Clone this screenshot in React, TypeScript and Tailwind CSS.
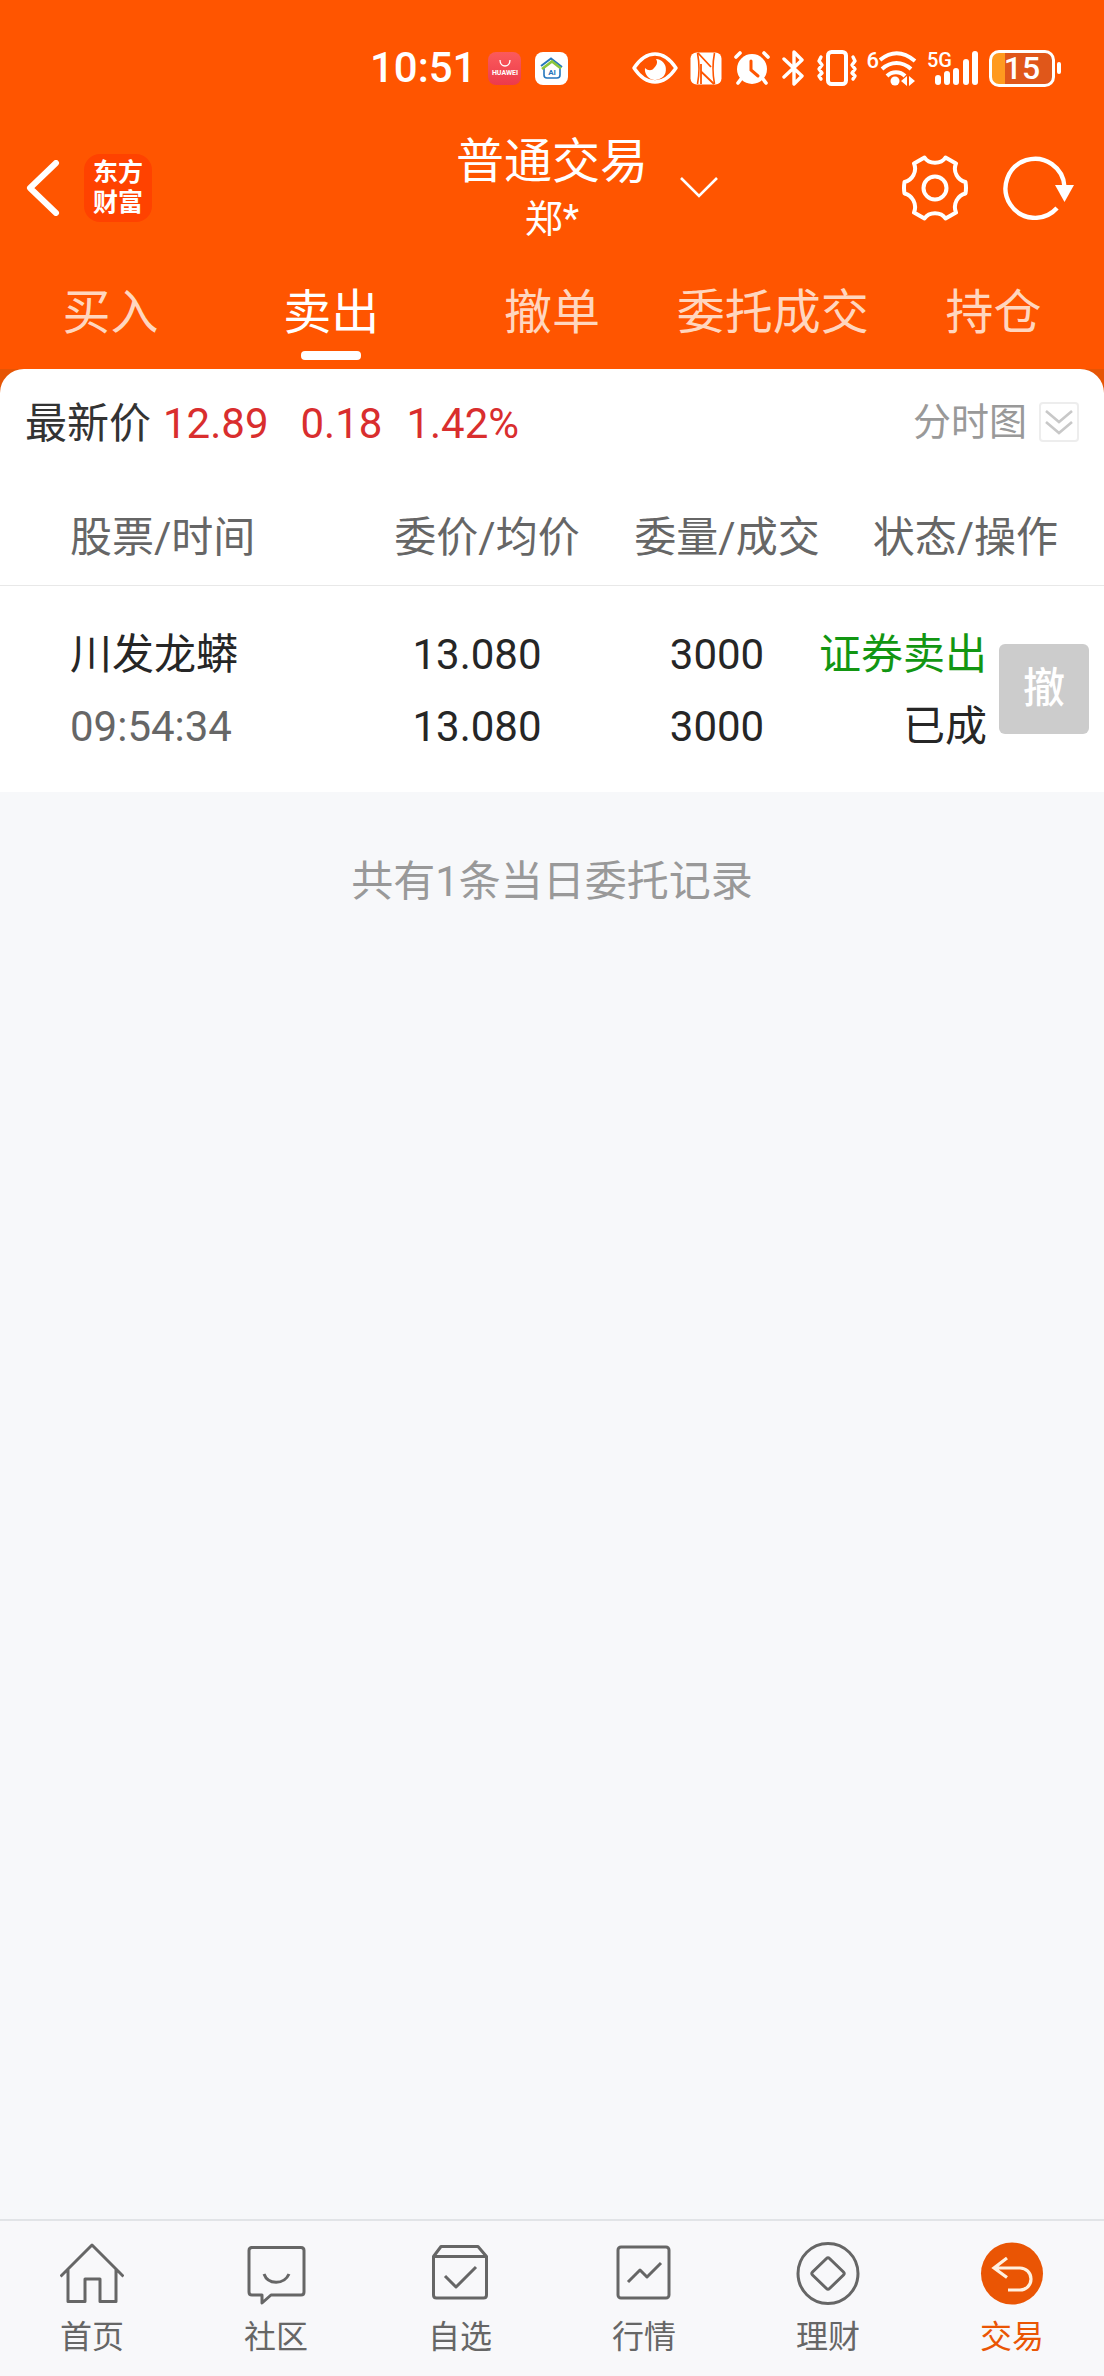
import React from "react";

type IconProps = { className?: string };

function HuaweiAppIcon() {
  return (
    <span className="flex h-[33px] w-[33px] flex-col items-center justify-center rounded-lg bg-gradient-to-b from-[#fb5a5c] to-[#ec3a4c]">
      <svg viewBox="0 0 12 7" className="h-[7px] w-3" fill="none" stroke="#fff" strokeWidth="1.300">
        <path d="M1 0c0 8 10 8 10 0" />
      </svg>
      <span className="mt-0.5 text-[7px] leading-[8px] font-bold text-white">HUAWEI</span>
    </span>
  );
}

function SmartHomeIcon() {
  return (
    <svg viewBox="0 0 33 33" className="h-[33px] w-[33px]">
      <rect width="33" height="33" rx="8" fill="#fff" />
      <path d="M9 15v8c0 2 1 3 3 3h10c2 0 3-1 3-3v-8" fill="none" stroke="#2577bd" strokeWidth="1.600" />
      <path d="M6 14 16 6.500l11 8.500" fill="none" stroke="#2577bd" strokeWidth="2" />
      <path d="M7 17 17 9.500l9 7" fill="none" stroke="#8cc63e" strokeWidth="2.600" />
      <text x="17" y="23" textAnchor="middle" fontSize="8" fontWeight="700" fill="#2577bd">
        AI
      </text>
    </svg>
  );
}

function EyeIcon() {
  return (
    <svg viewBox="0 0 46 32" className="h-8 w-[46px]" fill="none">
      <path d="M2 16C8 7 15 2 23 2s15 5 21 14c-6 9-13 14-21 14S8 25 2 16Z" stroke="#fff" strokeWidth="3.400" strokeLinejoin="round" />
      <path d="M24 7a10.500 10.500 0 1 1-11 9c3 3 7 3 9 0 3-3 4-6 2-9Z" fill="#fff" />
    </svg>
  );
}

function NfcIcon() {
  return (
    <svg viewBox="0 0 32 33" className="h-[33px] w-8">
      <rect x="0.500" y="0.500" width="31" height="32" rx="6" fill="#fff" />
      <path d="M7.500 1q3 15.500 0 31M24.500 1q-3 15.500 0 31" fill="none" stroke="#ff5500" strokeWidth="1.600" />
      <path d="M8 1 21 15M11 12V32M11 19.500 24 32" fill="none" stroke="#ff5500" strokeWidth="1.800" />
    </svg>
  );
}

function AlarmIcon() {
  return (
    <svg viewBox="0 0 36 34" className="h-[34px] w-9" fill="none" stroke="#fff" strokeLinecap="round">
      <circle cx="18" cy="18" r="15" fill="#fff" stroke="none" />
      <path d="M2 6l4-4M34 6l-4-4" strokeWidth="3.600" />
      <path d="M7 28l-3 4M29 28l3 4" strokeWidth="3.600" />
      <path d="M17 10v9l7 6" stroke="#ff5500" strokeWidth="3" />
    </svg>
  );
}

function BluetoothIcon() {
  return (
    <svg viewBox="0 0 22 36" className="h-9 w-[22px]" fill="none" stroke="#fff" strokeWidth="3.400" strokeLinecap="round" strokeLinejoin="round">
      <path d="M2 9l18 17-8 8V2l8 8L2 27" />
    </svg>
  );
}

function VibrateIcon() {
  return (
    <svg viewBox="0 0 42 36" className="h-9 w-[42px]" fill="none" stroke="#fff" strokeWidth="3.400" strokeLinecap="round" strokeLinejoin="round">
      <rect x="12" y="2" width="18" height="32" rx="3.500" strokeWidth="4" />
      <path d="M5 7l-2 4 3 4-3 4 3 4-3 3 2 3M37 7l2 4-3 4 3 4-3 4 3 3-2 3" />
    </svg>
  );
}

function WifiIcon() {
  return (
    <span className="flex h-9 items-start">
      <span className="text-[22px] leading-[22px] font-medium">6</span>
      <svg viewBox="0 0 38 36" className="h-9 w-[38px]" fill="none" stroke="#fff" strokeWidth="4">
        <path d="M1 10C12 1 24 1 36 11M3 19c9-8 20-8 29 0M8 26c5-5 13-5 18 0" />
        <circle cx="16" cy="31" r="4.500" fill="#fff" stroke="none" />
        <path d="M28 26v10l-6-5zM30 26v10l6-5z" fill="#fff" stroke="none" />
      </svg>
    </span>
  );
}

function SignalIcon() {
  return (
    <span className="relative block h-9 w-[52px]">
      <svg viewBox="0 0 52 36" className="h-9 w-[52px]" fill="#fff">
        <rect x="8" y="25" width="6" height="10" rx="3" />
        <rect x="17" y="21" width="6" height="14" rx="3" />
        <rect x="26" y="18" width="6" height="17" rx="3" />
        <rect x="36" y="9" width="6" height="26" rx="3" />
        <rect x="45" y="1" width="6" height="34" rx="3" />
      </svg>
      <span className="absolute top-0 left-0 text-[20px] leading-[20px] font-medium">5G</span>
    </span>
  );
}

function Battery() {
  return (
    <span className="flex items-center gap-[2px]">
      <span className="flex h-[37px] w-[66px] items-center justify-center rounded-[10px] border-[3px] border-white bg-[linear-gradient(to_right,#ff9a1f_13px,#e0571a_13px)] text-[32px] leading-[32px] font-medium">
        15
      </span>
      <span className="h-3 w-1 rounded-full bg-white" />
    </span>
  );
}

function BackIcon() {
  return (
    <svg viewBox="0 0 34 56" className="h-14 w-[34px]" fill="none" stroke="#fff" strokeWidth="6" strokeLinecap="round" strokeLinejoin="round">
      <path d="M30 3 4 28l26 25" />
    </svg>
  );
}

function GearIcon() {
  return (
    <svg viewBox="0 0 66 66" className="h-[66px] w-[66px]" fill="none" stroke="#fff" strokeWidth="4" strokeLinejoin="round">
      <path d="M22.500 2.500C27 9.500 39 9.500 43.500 2.500L54 8.500C50.500 16.500 56 25.500 63.500 27Q64.500 33 63.500 38.500C56 40 50.500 49 54 57.500L43.500 63.500C39 56.500 27 56.500 22.500 63.500L12 57.500C15.500 49 10 40 2.500 38.500Q1.500 33 2.500 27C10 25.500 15.500 16.500 12 8.500Z" />
      <circle cx="33" cy="33" r="11.500" />
    </svg>
  );
}

function RefreshIcon() {
  return (
    <svg viewBox="0 0 72 64" className="h-16 w-[72px]" fill="none" stroke="#fff" strokeWidth="4.400">
      <path d="M61.500 31A29.500 29.500 0 1 0 54 52" />
      <path d="M52 29h19l-9.500 17z" fill="#fff" stroke="none" />
    </svg>
  );
}

function HomeIcon({ className }: IconProps) {
  return (
    <svg viewBox="0 0 64 64" className={className} fill="none" stroke="currentColor" strokeWidth="3" strokeLinejoin="round">
      <path d="M0.500 35.500 32 4l31.500 31.500M8 28v32.500h17V38h15v22.500h16V28" />
    </svg>
  );
}

function CommunityIcon({ className }: IconProps) {
  return (
    <svg viewBox="0 0 64 64" className={className} fill="none" stroke="currentColor" strokeWidth="3" strokeLinejoin="round">
      <path d="M7 6.500h50q3 0 3 3V51q0 3-3 3H27l-9 8v-8H8q-3 0-3-3V9.500q0-3 3-3Z" />
      <path d="M20 33c4 11 20 11 25 0" />
    </svg>
  );
}

function WatchlistIcon({ className }: IconProps) {
  return (
    <svg viewBox="0 0 64 64" className={className} fill="none" stroke="currentColor" strokeWidth="3" strokeLinejoin="round">
      <path d="M5.500 15.500 13 5.500h37l8.500 10V54q0 3-3 3h-47q-3 0-3-3ZM5.500 15.500h53" />
      <path d="M17 35l11 11 20-20" />
    </svg>
  );
}

function MarketIcon({ className }: IconProps) {
  return (
    <svg viewBox="0 0 64 64" className={className} fill="none" stroke="currentColor" strokeWidth="3" strokeLinejoin="round">
      <rect x="6" y="6" width="51" height="51" rx="3" />
      <path d="M16 41l12-12 7 7 14-14" />
    </svg>
  );
}

function WealthIcon({ className }: IconProps) {
  return (
    <svg viewBox="0 0 64 64" className={className} fill="none" stroke="currentColor" strokeWidth="3" strokeLinejoin="round">
      <circle cx="32" cy="32.500" r="30" />
      <path d="M30.500 17.500q1.500-1.500 3 0l14 13.500q1.500 1.500 0 3l-14 13.500q-1.500 1.500-3 0L16.500 34q-1.500-1.500 0-3Z" />
    </svg>
  );
}

function TradeIcon({ className }: IconProps) {
  return (
    <svg viewBox="0 0 64 64" className={className} fill="none">
      <circle cx="32" cy="32.500" r="31" fill="currentColor" />
      <path d="M27 17 14 27l13 9.500M15 27h25a10.500 10.500 0 0 1 0 22H28" stroke="#fff0e0" strokeWidth="3.200" />
    </svg>
  );
}

const tabs = ["买入", "卖出", "撤单", "委托成交", "持仓"];

const navItems = [
  { label: "首页", Icon: HomeIcon },
  { label: "社区", Icon: CommunityIcon },
  { label: "自选", Icon: WatchlistIcon },
  { label: "行情", Icon: MarketIcon },
  { label: "理财", Icon: WealthIcon },
  { label: "交易", Icon: TradeIcon },
];

function StatusBar() {
  return (
    <div className="flex h-[130px] items-start justify-end pt-12 pr-[43px]">
      <div className="flex h-10 items-center">
        <span className="text-[42px] leading-10 font-medium">10:51</span>
        <span className="ml-3 flex gap-3.5">
          <HuaweiAppIcon />
          <SmartHomeIcon />
        </span>
        <span className="ml-16 flex items-center gap-3">
          <EyeIcon />
          <NfcIcon />
          <AlarmIcon />
          <BluetoothIcon />
          <VibrateIcon />
        </span>
        <span className="ml-2 flex items-center gap-2.5">
          <WifiIcon />
          <SignalIcon />
          <Battery />
        </span>
      </div>
    </div>
  );
}

function TitleBar() {
  return (
    <div className="grid h-[116px] grid-cols-[1fr_auto_1fr] items-center">
      <div className="flex items-center pl-[26px]">
        <button aria-label="返回">
          <BackIcon />
        </button>
        <span className="ml-6 flex h-[68px] w-[68px] flex-col items-center justify-center rounded-2xl bg-[#ff4200] text-[25px] leading-[30px] font-bold">
          <span>东方</span>
          <span>财富</span>
        </span>
      </div>
      <h1 className="pt-0.5 text-center">
        <span className="block text-[48px] leading-[60px]">普通交易</span>
        <span className="block text-[38px] leading-[54px]">郑*</span>
      </h1>
      <div className="flex items-center pr-[29px] pl-8">
        <button aria-label="切换账户">
          <svg viewBox="0 0 38 22" className="h-[22px] w-[38px]" fill="none" stroke="#fff" strokeWidth="2.600">
            <path d="M1 1l18 18L37 1" />
          </svg>
        </button>
        <button aria-label="设置" className="ml-auto">
          <GearIcon />
        </button>
        <button aria-label="刷新" className="ml-[35px]">
          <RefreshIcon />
        </button>
      </div>
    </div>
  );
}

function Tabs() {
  return (
    <nav className="grid grid-cols-5 pt-[34px] pb-[9px]">
      {tabs.map((tab) => {
        const active = tab === "卖出";
        return (
          <button key={tab} className="flex flex-col items-center gap-[5px]" aria-current={active ? "page" : undefined}>
            <span className={active ? "text-[48px] leading-[66px] text-white" : "text-[48px] leading-[66px] text-[#ffd6bf]"}>
              {tab}
            </span>
            <span className={active ? "h-[9px] w-[60px] rounded bg-white" : "h-[9px] w-[60px]"} />
          </button>
        );
      })}
    </nav>
  );
}

function PriceRow() {
  return (
    <div className="flex h-[119px] items-start justify-between pt-[26px] pr-[25px] pl-[25px]">
      <p className="flex text-[42px] leading-[58px] text-[#d92e2e]">
        <span className="text-[#333]">最新价</span>
        <span className="ml-3">12.89</span>
        <span className="ml-8">0.18</span>
        <span className="ml-6">1.42%</span>
      </p>
      <button className="flex items-center gap-3 text-[38px] leading-[54px] text-[#999]">
        分时图
        <span className="flex h-10 w-10 items-center justify-center rounded-sm border-2 border-[#ededed]">
          <svg viewBox="0 0 28 26" className="h-[26px] w-7" fill="none" stroke="#c8c8c8" strokeWidth="2.600">
            <path d="M1 2l13 11L27 2M1 13l13 11 13-11" />
          </svg>
        </span>
      </button>
    </div>
  );
}

function OrdersTable() {
  return (
    <table className="w-full table-fixed text-[42px]">
      <colgroup>
        <col />
        <col className="w-[240px]" />
        <col className="w-[240px]" />
        <col className="w-[257px]" />
      </colgroup>
      <thead>
        <tr className="h-[97px] border-b border-[#e8e8e8] leading-[60px] text-[#666]">
          <th className="pt-1 pl-[70px] text-left font-normal">股票/时间</th>
          <th className="pt-1 font-normal">委价/均价</th>
          <th className="pt-1 font-normal">委量/成交</th>
          <th className="pt-1 pr-[46px] text-right font-normal whitespace-nowrap">状态/操作</th>
        </tr>
      </thead>
      <tbody>
        <tr className="h-[207px] leading-[72px] text-[#262626]">
          <td className="pt-1 pl-[70px]">
            <div>川发龙蟒</div>
            <div className="text-[#666]">09:54:34</div>
          </td>
          <td className="pt-1 pr-5 text-center">
            <div>13.080</div>
            <div>13.080</div>
          </td>
          <td className="pt-1 pr-5 text-center">
            <div>3000</div>
            <div>3000</div>
          </td>
          <td>
            <div className="flex items-center justify-end gap-3 pr-[15px]">
              <div className="pt-1 text-right whitespace-nowrap">
                <div className="text-[#129612]">证券卖出</div>
                <div>已成</div>
              </div>
              <button disabled className="h-[90px] w-[90px] shrink-0 rounded-md bg-[#ccc] font-medium text-white">
                撤
              </button>
            </div>
          </td>
        </tr>
      </tbody>
    </table>
  );
}

function BottomNav() {
  return (
    <nav className="grid grid-cols-6 border-t-2 border-[#e2e4e7] bg-[#f8f8fa] pt-5 pb-[19px]">
      {navItems.map(({ label, Icon }) => (
        <a
          key={label}
          href="#"
          className={
            label === "交易"
              ? "flex flex-col items-center gap-3 text-[#ea5504]"
              : "flex flex-col items-center gap-3 text-[#666]"
          }
        >
          <Icon className="h-16 w-16" />
          <span className="text-[32px] leading-10">{label}</span>
        </a>
      ))}
    </nav>
  );
}

export default function App() {
  return (
    <div className="flex min-h-screen flex-col bg-[#f7f8fa] font-[Roboto,'Noto_Sans_CJK_SC',sans-serif]">
      <header className="bg-[#ff5500] text-white">
        <StatusBar />
        <TitleBar />
        <Tabs />
      </header>
      <main className="flex-1">
        <div className="bg-[#e65505]">
          <section className="rounded-t-3xl bg-white">
            <PriceRow />
            <OrdersTable />
          </section>
        </div>
        <p className="pt-[60px] text-center text-[42px] leading-[60px] text-[#999]">共有1条当日委托记录</p>
      </main>
      <BottomNav />
    </div>
  );
}
